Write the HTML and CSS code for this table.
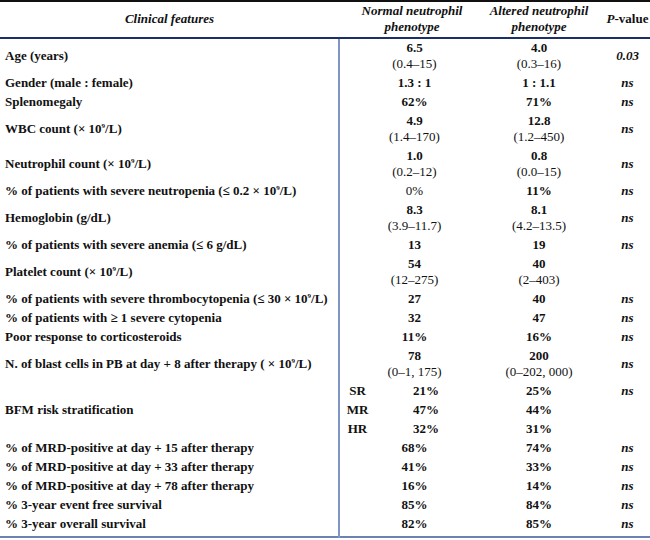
FILE: index.html
```html
<!DOCTYPE html>
<html>
<head>
<meta charset="utf-8">
<link rel="stylesheet" href="styles.css">
</head>
<body>
<table class="tbl">
  <colgroup>
    <col class="w-label">
    <col class="w-risk">
    <col class="w-pct">
    <col class="w-alt">
    <col class="w-p">
  </colgroup>
  <thead>
    <tr>
      <th class="c-label hd-label">Clinical features</th>
      <th class="c-val hd-normal" colspan="2">Normal neutrophil<br>phenotype</th>
      <th class="c-val">Altered neutrophil<br>phenotype</th>
      <th class="c-p"><i>P</i><span class="up">-value</span></th>
    </tr>
  </thead>
  <tbody>
    <tr class="dbl"><td class="c-label">Age (years)</td><td class="c-val" colspan="2"><b>6.5</b><br><span class="rg">(0.4–15)</span></td><td class="c-val"><b>4.0</b><br><span class="rg">(0.3–16)</span></td><td class="c-p">0.03</td></tr>
    <tr><td class="c-label">Gender (male : female)</td><td class="c-val" colspan="2"><b>1.3 : 1</b></td><td class="c-val"><b>1 : 1.1</b></td><td class="c-p">ns</td></tr>
    <tr><td class="c-label">Splenomegaly</td><td class="c-val" colspan="2"><b>62%</b></td><td class="c-val"><b>71%</b></td><td class="c-p">ns</td></tr>
    <tr class="dbl"><td class="c-label">WBC count (× 10<sup>9</sup>/L)</td><td class="c-val" colspan="2"><b>4.9</b><br><span class="rg">(1.4–170)</span></td><td class="c-val"><b>12.8</b><br><span class="rg">(1.2–450)</span></td><td class="c-p">ns</td></tr>
    <tr class="dbl"><td class="c-label">Neutrophil count (× 10<sup>9</sup>/L)</td><td class="c-val" colspan="2"><b>1.0</b><br><span class="rg">(0.2–12)</span></td><td class="c-val"><b>0.8</b><br><span class="rg">(0.0–15)</span></td><td class="c-p">ns</td></tr>
    <tr><td class="c-label">% of patients with severe neutropenia (≤ 0.2 × 10<sup>9</sup>/L)</td><td class="c-val" colspan="2"><span class="rg">0%</span></td><td class="c-val"><b>11%</b></td><td class="c-p">ns</td></tr>
    <tr class="dbl"><td class="c-label">Hemoglobin (g/dL)</td><td class="c-val" colspan="2"><b>8.3</b><br><span class="rg">(3.9–11.7)</span></td><td class="c-val"><b>8.1</b><br><span class="rg">(4.2–13.5)</span></td><td class="c-p">ns</td></tr>
    <tr><td class="c-label">% of patients with severe anemia (≤ 6 g/dL)</td><td class="c-val" colspan="2"><b>13</b></td><td class="c-val"><b>19</b></td><td class="c-p">ns</td></tr>
    <tr class="dbl"><td class="c-label">Platelet count (× 10<sup>9</sup>/L)</td><td class="c-val" colspan="2"><b>54</b><br><span class="rg">(12–275)</span></td><td class="c-val"><b>40</b><br><span class="rg">(2–403)</span></td><td class="c-p"></td></tr>
    <tr><td class="c-label">% of patients with severe thrombocytopenia (≤ 30 × 10<sup>9</sup>/L)</td><td class="c-val" colspan="2"><b>27</b></td><td class="c-val"><b>40</b></td><td class="c-p">ns</td></tr>
    <tr><td class="c-label">% of patients with ≥ 1 severe cytopenia</td><td class="c-val" colspan="2"><b>32</b></td><td class="c-val"><b>47</b></td><td class="c-p">ns</td></tr>
    <tr><td class="c-label">Poor response to corticosteroids</td><td class="c-val" colspan="2"><b>11%</b></td><td class="c-val"><b>16%</b></td><td class="c-p">ns</td></tr>
    <tr class="dbl"><td class="c-label">N. of blast cells in PB at day + 8 after therapy ( × 10<sup>9</sup>/L)</td><td class="c-val" colspan="2"><b>78</b><br><span class="rg">(0–1, 175)</span></td><td class="c-val"><b>200</b><br><span class="rg">(0–202, 000)</span></td><td class="c-p">ns</td></tr>
    <tr><td class="c-label" rowspan="3">BFM risk stratification</td><td class="c-risk">SR</td><td class="c-pct">21%</td><td class="c-val"><b>25%</b></td><td class="c-p">ns</td></tr>
    <tr><td class="c-risk">MR</td><td class="c-pct">47%</td><td class="c-val"><b>44%</b></td><td class="c-p"></td></tr>
    <tr><td class="c-risk">HR</td><td class="c-pct">32%</td><td class="c-val"><b>31%</b></td><td class="c-p"></td></tr>
    <tr><td class="c-label">% of MRD-positive at day + 15 after therapy</td><td class="c-val" colspan="2"><b>68%</b></td><td class="c-val"><b>74%</b></td><td class="c-p">ns</td></tr>
    <tr><td class="c-label">% of MRD-positive at day + 33 after therapy</td><td class="c-val" colspan="2"><b>41%</b></td><td class="c-val"><b>33%</b></td><td class="c-p">ns</td></tr>
    <tr><td class="c-label">% of MRD-positive at day + 78 after therapy</td><td class="c-val" colspan="2"><b>16%</b></td><td class="c-val"><b>14%</b></td><td class="c-p">ns</td></tr>
    <tr><td class="c-label">% 3-year event free survival</td><td class="c-val" colspan="2"><b>85%</b></td><td class="c-val"><b>84%</b></td><td class="c-p">ns</td></tr>
    <tr class="last"><td class="c-label">% 3-year overall survival</td><td class="c-val" colspan="2"><b>82%</b></td><td class="c-val"><b>85%</b></td><td class="c-p">ns</td></tr>
  </tbody>
</table>
</body>
</html>
```

FILE: styles.css
```css
html, body {
  margin: 0;
  padding: 0;
  background: #ffffff;
}
body {
  font-family: "Liberation Serif", "Times New Roman", serif;
  font-size: 13px;
  color: #111111;
}
.tbl {
  width: 650px;
  border-collapse: collapse;
  border-top: 2px solid #111111;
  border-bottom: 2px solid #6b82b3;
  table-layout: fixed;
}
.w-label { width: 339px; }
.w-risk { width: 36px; }
.w-pct { width: 114px; }
.w-alt { width: 100px; }
.w-p { width: 61px; }

.tbl th {
  font-weight: bold;
  font-style: italic;
  line-height: 16px;
  padding: 0 0 2px 0;
  height: 33px;
  border-bottom: 2px solid #1c2f66;
  vertical-align: middle;
}
.tbl td {
  line-height: 16px;
  padding: 1px 0 2px 0;
  vertical-align: middle;
}
.tbl tr.last td {
  padding-bottom: 4px;
}
.c-label {
  padding-left: 5px !important;
  text-align: left;
  font-weight: bold;
  border-right: 2px solid #7f95c4;
}
.hd-label {
  text-align: center !important;
  border-right: none !important;
  padding-left: 0 !important;
}
.c-val {
  text-align: center;
}
.hd-normal {
  padding-right: 4px !important;
}
.c-risk {
  text-align: center;
  font-weight: bold;
}
.c-pct {
  text-align: center;
  font-weight: bold;
  padding-right: 12px !important;
}
.c-p {
  text-align: center;
  font-weight: bold;
  font-style: italic;
  padding-left: 16px !important;
}
.up {
  font-style: normal;
}
.rg {
  font-weight: normal;
}
sup {
  font-size: 7px;
  line-height: 0;
  vertical-align: 5px;
}
```
